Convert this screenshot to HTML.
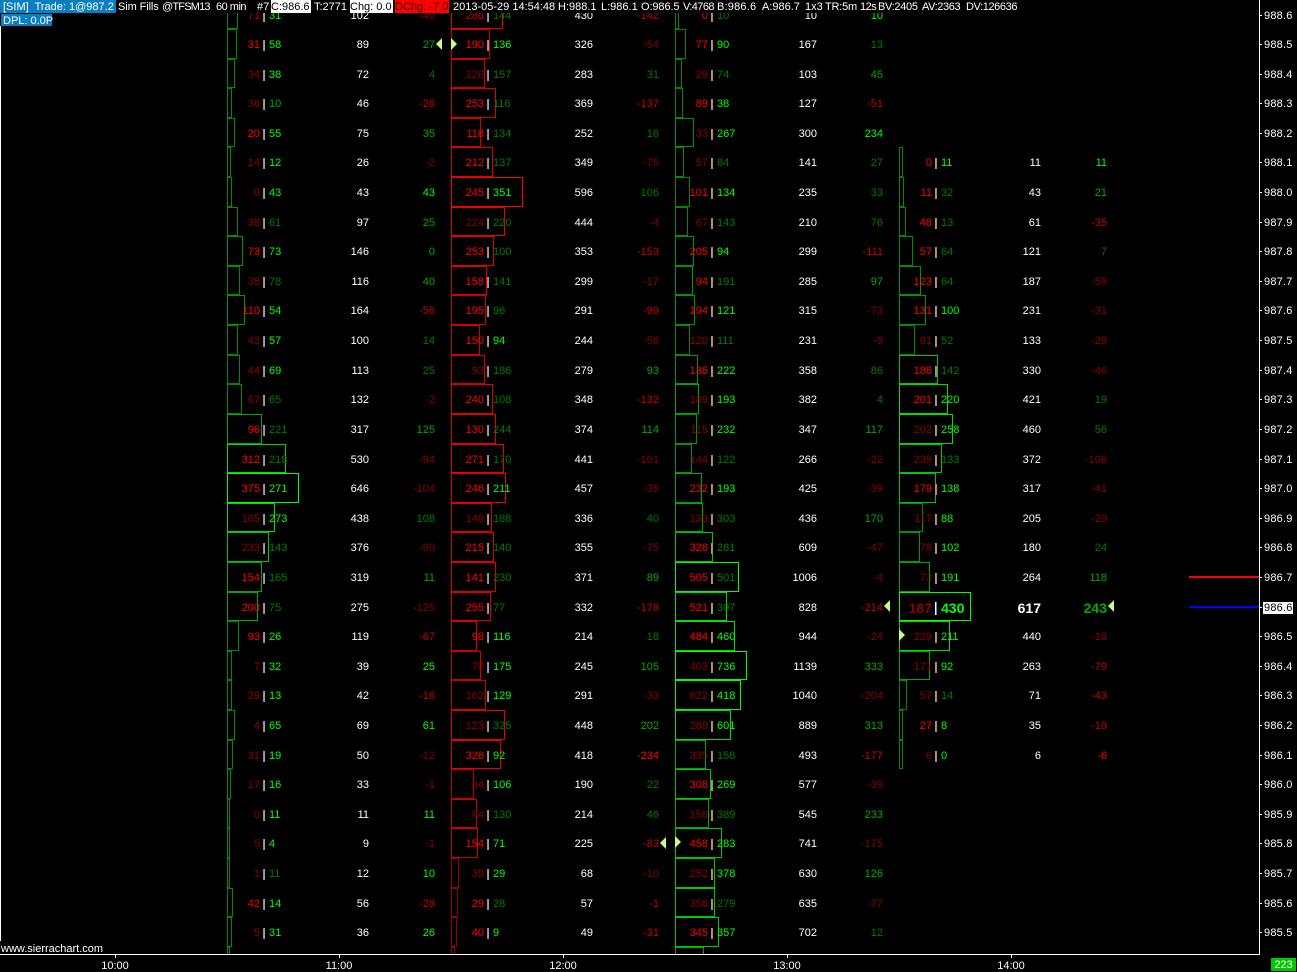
<!DOCTYPE html>
<html><head><meta charset="utf-8"><title>Chart</title>
<style>
html,body{margin:0;padding:0;background:#000}
#w{position:relative;width:1297px;height:972px;overflow:hidden;background:#000;color:#fff;font:11px/13px "Liberation Sans",Arial,sans-serif}
#h{position:absolute;left:0;top:0;width:1259px;height:13px;background:#000;z-index:5}
#h span,.t{position:absolute;top:0;height:13px;line-height:15px;white-space:nowrap;z-index:6}
.c{position:absolute;top:0;width:300px;height:955px}
.c p{position:absolute;left:0;width:230px;margin:0;line-height:30px;white-space:nowrap}
.c i{position:absolute;left:0;top:0;height:100%;box-sizing:border-box;border:1px solid}
.c b,.c s,.c em,.c q{position:absolute;top:1px;font-weight:normal;font-style:normal;text-decoration:none;quotes:none;height:30px}
.c q:before,.c q:after{content:""}
.c b{left:0;width:33px;text-align:right}
.c s{left:42px}
.c em{left:0;width:142px;text-align:right;color:#fff}
.c q{left:0;width:208px;text-align:right}
.c u{position:absolute;left:36px;top:11px;width:2px;height:11px;overflow:hidden;color:transparent;text-decoration:none;line-height:11px;background:linear-gradient(90deg,#d0803c 50%,#7aa6d6 50%)}
.o u{background:linear-gradient(90deg,#8a9cb0 50%,#d0803c 50%)}
.c .B b,.c .B s,.c .B em,.c .B q{font:bold 14px/32px "Liberation Sans",Arial,sans-serif;top:0}
.c .B u{background:linear-gradient(90deg,#fff 50%,#3a9cf0 50%);height:13px;top:10px}
.R{color:#f00}.r{color:#c80000}.d{color:#8c0000}
.G{color:#0f0}.g{color:#00aa00}.h{color:#007a00}
i.a{border-color:#008a00}i.b{border-color:#009800}i.c{border-color:#00a800}i.e{border-color:#00c800}i.f{border-color:#00e000}i.j{border-color:#0f0}
.n i.a{border-color:#900}.n i.b{border-color:#b00}.n i.c{border-color:#c00}.n i.e{border-color:#d00}.n i.f{border-color:#e80000}.n i.j{border-color:#f00}
.y0{top:0;height:29px}.y1{top:29px;height:30px}.y2{top:59px;height:29px}.y3{top:88px;height:30px}.y4{top:118px;height:29px}.y5{top:147px;height:30px}.y6{top:177px;height:30px}.y7{top:207px;height:29px}.y8{top:236px;height:30px}.y9{top:266px;height:29px}.y10{top:295px;height:30px}.y11{top:325px;height:30px}.y12{top:355px;height:29px}.y13{top:384px;height:30px}.y14{top:414px;height:30px}.y15{top:444px;height:29px}.y16{top:473px;height:30px}.y17{top:503px;height:29px}.y18{top:532px;height:30px}.y19{top:562px;height:30px}.y20{top:592px;height:29px}.y21{top:621px;height:30px}.y22{top:651px;height:29px}.y23{top:680px;height:30px}.y24{top:710px;height:30px}.y25{top:740px;height:29px}.y26{top:769px;height:30px}.y27{top:799px;height:29px}.y28{top:828px;height:30px}.y29{top:858px;height:30px}.y30{top:888px;height:29px}.y31{top:917px;height:30px}.y32{top:947px;height:8px}
.l,.m{position:absolute;width:0;height:0;border-style:solid;z-index:3}
.l{border-width:6px 6px 6px 0;border-color:transparent #c8ff80 transparent transparent}
.m{border-width:6px 0 6px 6px;border-color:transparent transparent transparent #c8ff80}
.ln{position:absolute;background:#fff}
.p{position:absolute;left:1264px;line-height:13px;height:13px;margin-top:1px;letter-spacing:.2px}
.k{position:absolute;left:1260px;width:2px;height:1px;background:#fff}
.x{position:absolute;top:960px;width:40px;text-align:center;line-height:13px}
.xk{position:absolute;top:955px;width:1px;height:3px;background:#fff}
</style></head><body><div id="w">
<div id="h"></div>
<span class="t" style="left:0;width:116px;background:#0a7fc0"><span style="position:static;padding-left:3px">[SIM]&nbsp; Trade: 1@987.2</span></span>
<span class="t" style="left:118px;letter-spacing:-.1px">Sim Fills</span>
<span class="t" style="left:162px;letter-spacing:-.8px">@TFSM13</span>
<span class="t" style="left:216px;letter-spacing:-.5px">60 min</span>
<span class="t" style="left:257px">#7</span>
<span class="t" style="left:271px;width:40px;background:#fff;color:#000">C:986.6</span>
<span class="t" style="left:314px">T:2771</span>
<span class="t" style="left:350px;width:43px;background:#fff;color:#000">Chg: 0.0</span>
<span class="t" style="left:395px;width:54px;background:#f00;color:#400">DChg: -7.0</span>
<span class="t" style="left:453px">2013-05-29 14:54:48</span>
<span class="t" style="left:558px">H:988.1</span>
<span class="t" style="left:601px">L:986.1</span>
<span class="t" style="left:641px;letter-spacing:-.1px">O:986.5</span>
<span class="t" style="left:683px;letter-spacing:-.6px">V:4768</span>
<span class="t" style="left:717px;letter-spacing:.2px">B:986.6</span>
<span class="t" style="left:762px">A:986.7</span>
<span class="t" style="left:805px">1x3</span>
<span class="t" style="left:825px;letter-spacing:-.2px">TR:5m</span>
<span class="t" style="left:860px;letter-spacing:-.5px">12s</span>
<span class="t" style="left:878px;letter-spacing:-.3px">BV:2405</span>
<span class="t" style="left:922px;letter-spacing:-.4px">AV:2363</span>
<span class="t" style="left:966px;letter-spacing:-.4px">DV:126636</span>
<span class="t" style="left:1px;top:14px;width:51px;height:12px;line-height:14px;background:#0a7fc0;padding-left:0"><span style="position:static;padding-left:2px">DPL: 0.0P</span></span>

<div class="c" style="left:227px">
<p class="y0"><i class="a" style="width:11px"></i><b class="r">71</b><u>|</u><s class="G">31</s><em>102</em><q class="d">-40</q></p>
<p class="y1"><i class="a" style="width:10px"></i><b class="R">31</b><u>|</u><s class="G">58</s><em>89</em><q class="g">27</q></p>
<p class="y2"><i class="a" style="width:8px"></i><b class="d">34</b><u>|</u><s class="G">38</s><em>72</em><q class="h">4</q></p>
<p class="y3"><i class="a" style="width:5px"></i><b class="d">36</b><u>|</u><s class="g">10</s><em>46</em><q class="r">-26</q></p>
<p class="y4"><i class="a" style="width:8px"></i><b class="R">20</b><u>|</u><s class="G">55</s><em>75</em><q class="g">35</q></p>
<p class="y5"><i class="a" style="width:4px"></i><b class="d">14</b><u>|</u><s class="G">12</s><em>26</em><q class="d">-2</q></p>
<p class="y6"><i class="a" style="width:5px"></i><b class="d">0</b><u>|</u><s class="G">43</s><em>43</em><q class="G">43</q></p>
<p class="y7"><i class="a" style="width:11px"></i><b class="d">36</b><u>|</u><s class="h">61</s><em>97</em><q class="g">25</q></p>
<p class="y8"><i class="b" style="width:16px"></i><b class="R">73</b><u>|</u><s class="G">73</s><em>146</em><q class="g">0</q></p>
<p class="y9"><i class="a" style="width:13px"></i><b class="d">38</b><u>|</u><s class="h">78</s><em>116</em><q class="g">40</q></p>
<p class="y10"><i class="b" style="width:18px"></i><b class="R">110</b><u>|</u><s class="G">54</s><em>164</em><q class="r">-56</q></p>
<p class="y11"><i class="a" style="width:11px"></i><b class="d">43</b><u>|</u><s class="G">57</s><em>100</em><q class="h">14</q></p>
<p class="y12"><i class="a" style="width:13px"></i><b class="d">44</b><u>|</u><s class="G">69</s><em>113</em><q class="h">25</q></p>
<p class="y13"><i class="a" style="width:15px"></i><b class="d">67</b><u>|</u><s class="h">65</s><em>132</em><q class="d">-2</q></p>
<p class="y14"><i class="c" style="width:35px"></i><b class="R">96</b><u>|</u><s class="h">221</s><em>317</em><q class="g">125</q></p>
<p class="y15"><i class="f" style="width:59px"></i><b class="R">312</b><u>|</u><s class="h">218</s><em>530</em><q class="d">-94</q></p>
<p class="y16"><i class="j" style="width:72px"></i><b class="R">375</b><u>|</u><s class="G">271</s><em>646</em><q class="d">-104</q></p>
<p class="y17"><i class="f" style="width:48px"></i><b class="d">165</b><u>|</u><s class="G">273</s><em>438</em><q class="h">108</q></p>
<p class="y18"><i class="e" style="width:42px"></i><b class="d">233</b><u>|</u><s class="h">143</s><em>376</em><q class="d">-90</q></p>
<p class="y19"><i class="c" style="width:35px"></i><b class="R">154</b><u>|</u><s class="h">165</s><em>319</em><q class="g">11</q></p>
<p class="y20"><i class="c" style="width:31px"></i><b class="R">200</b><u>|</u><s class="h">75</s><em>275</em><q class="d">-125</q></p>
<p class="y21"><i class="a" style="width:12px"></i><b class="R">93</b><u>|</u><s class="G">26</s><em>119</em><q class="r">-67</q></p>
<p class="y22"><i class="a" style="width:5px"></i><b class="d">7</b><u>|</u><s class="G">32</s><em>39</em><q class="G">25</q></p>
<p class="y23"><i class="a" style="width:5px"></i><b class="d">29</b><u>|</u><s class="G">13</s><em>42</em><q class="r">-16</q></p>
<p class="y24"><i class="a" style="width:8px"></i><b class="d">4</b><u>|</u><s class="G">65</s><em>69</em><q class="G">61</q></p>
<p class="y25"><i class="a" style="width:6px"></i><b class="d">31</b><u>|</u><s class="G">19</s><em>50</em><q class="d">-12</q></p>
<p class="y26"><i class="a" style="width:4px"></i><b class="d">17</b><u>|</u><s class="G">16</s><em>33</em><q class="d">-1</q></p>
<p class="y27"><i class="a" style="width:3px"></i><b class="d">0</b><u>|</u><s class="G">11</s><em>11</em><q class="G">11</q></p>
<p class="y28"><i class="a" style="width:3px"></i><b class="d">5</b><u>|</u><s class="G">4</s><em>9</em><q class="d">-1</q></p>
<p class="y29"><i class="a" style="width:3px"></i><b class="d">1</b><u>|</u><s class="h">11</s><em>12</em><q class="G">10</q></p>
<p class="y30"><i class="a" style="width:6px"></i><b class="R">42</b><u>|</u><s class="G">14</s><em>56</em><q class="r">-28</q></p>
<p class="y31"><i class="a" style="width:5px"></i><b class="d">5</b><u>|</u><s class="G">31</s><em>36</em><q class="G">26</q></p>
<p class="y32"><i class="a" style="width:3px"></i></p>
</div>

<div class="c n" style="left:451px">
<p class="y0"><i class="f" style="width:52px"></i><b class="r">288</b><u>|</u><s class="h">144</s><em>430</em><q class="r">-142</q></p>
<p class="y1"><i class="c" style="width:39px"></i><b class="R">190</b><u>|</u><s class="G">136</s><em>326</em><q class="d">-54</q></p>
<p class="y2"><i class="c" style="width:34px"></i><b class="d">126</b><u>|</u><s class="h">157</s><em>283</em><q class="h">31</q></p>
<p class="y3"><i class="e" style="width:45px"></i><b class="R">253</b><u>|</u><s class="h">116</s><em>369</em><q class="r">-137</q></p>
<p class="y4"><i class="c" style="width:30px"></i><b class="R">118</b><u>|</u><s class="h">134</s><em>252</em><q class="h">16</q></p>
<p class="y5"><i class="e" style="width:42px"></i><b class="R">212</b><u>|</u><s class="h">137</s><em>349</em><q class="d">-75</q></p>
<p class="y6"><i class="j" style="width:72px"></i><b class="R">245</b><u>|</u><s class="G">351</s><em>596</em><q class="h">106</q></p>
<p class="y7"><i class="f" style="width:54px"></i><b class="d">224</b><u>|</u><s class="h">220</s><em>444</em><q class="d">-4</q></p>
<p class="y8"><i class="e" style="width:43px"></i><b class="R">253</b><u>|</u><s class="h">100</s><em>353</em><q class="r">-153</q></p>
<p class="y9"><i class="e" style="width:36px"></i><b class="R">158</b><u>|</u><s class="h">141</s><em>299</em><q class="d">-17</q></p>
<p class="y10"><i class="c" style="width:35px"></i><b class="R">195</b><u>|</u><s class="h">96</s><em>291</em><q class="r">-99</q></p>
<p class="y11"><i class="c" style="width:29px"></i><b class="R">150</b><u>|</u><s class="G">94</s><em>244</em><q class="d">-56</q></p>
<p class="y12"><i class="c" style="width:34px"></i><b class="d">93</b><u>|</u><s class="h">186</s><em>279</em><q class="g">93</q></p>
<p class="y13"><i class="e" style="width:42px"></i><b class="R">240</b><u>|</u><s class="h">108</s><em>348</em><q class="r">-132</q></p>
<p class="y14"><i class="e" style="width:45px"></i><b class="R">130</b><u>|</u><s class="h">244</s><em>374</em><q class="g">114</q></p>
<p class="y15"><i class="f" style="width:53px"></i><b class="R">271</b><u>|</u><s class="h">170</s><em>441</em><q class="d">-101</q></p>
<p class="y16"><i class="f" style="width:55px"></i><b class="R">246</b><u>|</u><s class="G">211</s><em>457</em><q class="d">-35</q></p>
<p class="y17"><i class="e" style="width:41px"></i><b class="d">148</b><u>|</u><s class="h">188</s><em>336</em><q class="h">40</q></p>
<p class="y18"><i class="e" style="width:43px"></i><b class="R">215</b><u>|</u><s class="h">140</s><em>355</em><q class="d">-75</q></p>
<p class="y19"><i class="e" style="width:45px"></i><b class="R">141</b><u>|</u><s class="h">230</s><em>371</em><q class="g">89</q></p>
<p class="y20"><i class="e" style="width:40px"></i><b class="R">255</b><u>|</u><s class="h">77</s><em>332</em><q class="r">-178</q></p>
<p class="y21"><i class="c" style="width:26px"></i><b class="R">98</b><u>|</u><s class="G">116</s><em>214</em><q class="h">18</q></p>
<p class="y22"><i class="c" style="width:30px"></i><b class="d">70</b><u>|</u><s class="G">175</s><em>245</em><q class="g">105</q></p>
<p class="y23"><i class="c" style="width:35px"></i><b class="d">162</b><u>|</u><s class="G">129</s><em>291</em><q class="d">-33</q></p>
<p class="y24"><i class="f" style="width:54px"></i><b class="d">123</b><u>|</u><s class="h">325</s><em>448</em><q class="g">202</q></p>
<p class="y25"><i class="f" style="width:50px"></i><b class="R">326</b><u>|</u><s class="G">92</s><em>418</em><q class="R">-234</q></p>
<p class="y26"><i class="b" style="width:23px"></i><b class="d">84</b><u>|</u><s class="G">106</s><em>190</em><q class="h">22</q></p>
<p class="y27"><i class="c" style="width:26px"></i><b class="d">84</b><u>|</u><s class="h">130</s><em>214</em><q class="h">46</q></p>
<p class="y28"><i class="c" style="width:27px"></i><b class="R">154</b><u>|</u><s class="G">71</s><em>225</em><q class="r">-83</q></p>
<p class="y29"><i class="a" style="width:8px"></i><b class="d">39</b><u>|</u><s class="G">29</s><em>68</em><q class="d">-10</q></p>
<p class="y30"><i class="a" style="width:7px"></i><b class="R">29</b><u>|</u><s class="h">28</s><em>57</em><q class="r">-1</q></p>
<p class="y31"><i class="a" style="width:6px"></i><b class="R">40</b><u>|</u><s class="G">9</s><em>49</em><q class="r">-31</q></p>
<p class="y32"><i class="a" style="width:4px"></i></p>
</div>

<div class="c o" style="left:675px">
<p class="y0"><i class="a" style="width:4px"></i><b class="R">0</b><u>|</u><s class="h">10</s><em>10</em><q class="G">10</q></p>
<p class="y1"><i class="a" style="width:11px"></i><b class="R">77</b><u>|</u><s class="G">90</s><em>167</em><q class="h">13</q></p>
<p class="y2"><i class="a" style="width:7px"></i><b class="d">29</b><u>|</u><s class="h">74</s><em>103</em><q class="g">45</q></p>
<p class="y3"><i class="a" style="width:8px"></i><b class="R">89</b><u>|</u><s class="G">38</s><em>127</em><q class="r">-51</q></p>
<p class="y4"><i class="b" style="width:19px"></i><b class="d">33</b><u>|</u><s class="G">267</s><em>300</em><q class="G">234</q></p>
<p class="y5"><i class="a" style="width:9px"></i><b class="d">57</b><u>|</u><s class="h">84</s><em>141</em><q class="h">27</q></p>
<p class="y6"><i class="a" style="width:15px"></i><b class="R">101</b><u>|</u><s class="G">134</s><em>235</em><q class="h">33</q></p>
<p class="y7"><i class="a" style="width:13px"></i><b class="d">67</b><u>|</u><s class="h">143</s><em>210</em><q class="h">76</q></p>
<p class="y8"><i class="b" style="width:19px"></i><b class="R">205</b><u>|</u><s class="G">94</s><em>299</em><q class="r">-111</q></p>
<p class="y9"><i class="b" style="width:18px"></i><b class="R">94</b><u>|</u><s class="h">191</s><em>285</em><q class="g">97</q></p>
<p class="y10"><i class="b" style="width:20px"></i><b class="R">194</b><u>|</u><s class="G">121</s><em>315</em><q class="d">-73</q></p>
<p class="y11"><i class="a" style="width:15px"></i><b class="d">120</b><u>|</u><s class="h">111</s><em>231</em><q class="d">-9</q></p>
<p class="y12"><i class="b" style="width:23px"></i><b class="R">136</b><u>|</u><s class="G">222</s><em>358</em><q class="h">86</q></p>
<p class="y13"><i class="c" style="width:24px"></i><b class="d">189</b><u>|</u><s class="G">193</s><em>382</em><q class="h">4</q></p>
<p class="y14"><i class="b" style="width:22px"></i><b class="d">115</b><u>|</u><s class="G">232</s><em>347</em><q class="g">117</q></p>
<p class="y15"><i class="b" style="width:17px"></i><b class="d">144</b><u>|</u><s class="h">122</s><em>266</em><q class="d">-22</q></p>
<p class="y16"><i class="c" style="width:27px"></i><b class="R">232</b><u>|</u><s class="G">193</s><em>425</em><q class="d">-39</q></p>
<p class="y17"><i class="c" style="width:28px"></i><b class="d">133</b><u>|</u><s class="h">303</s><em>436</em><q class="g">170</q></p>
<p class="y18"><i class="e" style="width:38px"></i><b class="R">328</b><u>|</u><s class="h">281</s><em>609</em><q class="d">-47</q></p>
<p class="y19"><i class="j" style="width:64px"></i><b class="R">505</b><u>|</u><s class="h">501</s><em>1006</em><q class="d">-4</q></p>
<p class="y20"><i class="f" style="width:52px"></i><b class="R">521</b><u>|</u><s class="h">307</s><em>828</em><q class="r">-214</q></p>
<p class="y21"><i class="f" style="width:60px"></i><b class="R">484</b><u>|</u><s class="G">460</s><em>944</em><q class="d">-24</q></p>
<p class="y22"><i class="j" style="width:72px"></i><b class="d">403</b><u>|</u><s class="G">736</s><em>1139</em><q class="g">333</q></p>
<p class="y23"><i class="j" style="width:66px"></i><b class="d">622</b><u>|</u><s class="G">418</s><em>1040</em><q class="d">-204</q></p>
<p class="y24"><i class="f" style="width:56px"></i><b class="d">288</b><u>|</u><s class="G">601</s><em>889</em><q class="g">313</q></p>
<p class="y25"><i class="c" style="width:31px"></i><b class="d">335</b><u>|</u><s class="h">158</s><em>493</em><q class="r">-177</q></p>
<p class="y26"><i class="e" style="width:36px"></i><b class="R">308</b><u>|</u><s class="G">269</s><em>577</em><q class="d">-39</q></p>
<p class="y27"><i class="c" style="width:34px"></i><b class="d">156</b><u>|</u><s class="h">389</s><em>545</em><q class="g">233</q></p>
<p class="y28"><i class="e" style="width:47px"></i><b class="R">458</b><u>|</u><s class="G">283</s><em>741</em><q class="d">-175</q></p>
<p class="y29"><i class="e" style="width:40px"></i><b class="d">252</b><u>|</u><s class="G">378</s><em>630</em><q class="g">126</q></p>
<p class="y30"><i class="e" style="width:40px"></i><b class="d">356</b><u>|</u><s class="h">279</s><em>635</em><q class="d">-77</q></p>
<p class="y31"><i class="e" style="width:44px"></i><b class="R">345</b><u>|</u><s class="G">357</s><em>702</em><q class="h">12</q></p>
<p class="y32"><i class="c" style="width:29px"></i></p>
</div>

<div class="c o" style="left:899px">
<p class="y5"><i class="a" style="width:4px"></i><b class="R">0</b><u>|</u><s class="G">11</s><em>11</em><q class="G">11</q></p>
<p class="y6"><i class="a" style="width:5px"></i><b class="R">11</b><u>|</u><s class="h">32</s><em>43</em><q class="g">21</q></p>
<p class="y7"><i class="a" style="width:7px"></i><b class="R">48</b><u>|</u><s class="h">13</s><em>61</em><q class="r">-35</q></p>
<p class="y8"><i class="a" style="width:14px"></i><b class="R">57</b><u>|</u><s class="h">64</s><em>121</em><q class="h">7</q></p>
<p class="y9"><i class="b" style="width:22px"></i><b class="R">123</b><u>|</u><s class="h">64</s><em>187</em><q class="d">-59</q></p>
<p class="y10"><i class="b" style="width:27px"></i><b class="R">131</b><u>|</u><s class="G">100</s><em>231</em><q class="d">-31</q></p>
<p class="y11"><i class="a" style="width:16px"></i><b class="d">81</b><u>|</u><s class="h">52</s><em>133</em><q class="d">-29</q></p>
<p class="y12"><i class="e" style="width:39px"></i><b class="R">188</b><u>|</u><s class="h">142</s><em>330</em><q class="d">-46</q></p>
<p class="y13"><i class="f" style="width:49px"></i><b class="R">201</b><u>|</u><s class="G">220</s><em>421</em><q class="h">19</q></p>
<p class="y14"><i class="f" style="width:54px"></i><b class="d">202</b><u>|</u><s class="G">258</s><em>460</em><q class="h">56</q></p>
<p class="y15"><i class="e" style="width:43px"></i><b class="d">239</b><u>|</u><s class="h">133</s><em>372</em><q class="d">-106</q></p>
<p class="y16"><i class="e" style="width:37px"></i><b class="R">179</b><u>|</u><s class="G">138</s><em>317</em><q class="d">-41</q></p>
<p class="y17"><i class="b" style="width:24px"></i><b class="d">117</b><u>|</u><s class="G">88</s><em>205</em><q class="d">-29</q></p>
<p class="y18"><i class="b" style="width:21px"></i><b class="d">78</b><u>|</u><s class="G">102</s><em>180</em><q class="h">24</q></p>
<p class="y19"><i class="c" style="width:31px"></i><b class="d">73</b><u>|</u><s class="G">191</s><em>264</em><q class="g">118</q></p>
<p class="y20 B"><i class="j" style="width:72px"></i><b class="d">187</b><u>|</u><s class="G">430</s><em>617</em><q class="g">243</q></p>
<p class="y21"><i class="f" style="width:51px"></i><b class="d">229</b><u>|</u><s class="G">211</s><em>440</em><q class="d">-18</q></p>
<p class="y22"><i class="c" style="width:31px"></i><b class="d">171</b><u>|</u><s class="G">92</s><em>263</em><q class="r">-79</q></p>
<p class="y23"><i class="a" style="width:8px"></i><b class="d">57</b><u>|</u><s class="h">14</s><em>71</em><q class="r">-43</q></p>
<p class="y24"><i class="a" style="width:4px"></i><b class="R">27</b><u>|</u><s class="G">8</s><em>35</em><q class="r">-19</q></p>
<p class="y25"><i class="a" style="width:4px"></i><b class="d">6</b><u>|</u><s class="G">0</s><em>6</em><q class="R">-6</q></p>
</div>

<div class="l" style="left:436px;top:38px"></div>
<div class="m" style="left:451px;top:38px"></div>
<div class="l" style="left:660px;top:837px"></div>
<div class="m" style="left:675px;top:836px"></div>
<div class="l" style="left:884px;top:600px"></div>
<div class="m" style="left:899px;top:629px"></div>
<div class="l" style="left:1108px;top:600px"></div>

<div class="ln" style="left:1259px;top:0;width:1px;height:955px"></div>
<div class="ln" style="left:0;top:954px;width:1260px;height:1px"></div>
<div class="ln" style="left:0;top:26px;width:1px;height:915px"></div>
<div style="position:absolute;left:1189px;top:576px;width:70px;height:2px;background:#f00"></div>
<div style="position:absolute;left:1189px;top:606px;width:70px;height:2px;background:#00f"></div>

<div class="k" style="top:15px"></div><div class="p" style="top:9px">988.6</div>
<div class="k" style="top:44px"></div><div class="p" style="top:38px">988.5</div>
<div class="k" style="top:74px"></div><div class="p" style="top:68px">988.4</div>
<div class="k" style="top:103px"></div><div class="p" style="top:97px">988.3</div>
<div class="k" style="top:133px"></div><div class="p" style="top:127px">988.2</div>
<div class="k" style="top:162px"></div><div class="p" style="top:156px">988.1</div>
<div class="k" style="top:192px"></div><div class="p" style="top:186px">988.0</div>
<div class="k" style="top:222px"></div><div class="p" style="top:216px">987.9</div>
<div class="k" style="top:251px"></div><div class="p" style="top:245px">987.8</div>
<div class="k" style="top:281px"></div><div class="p" style="top:275px">987.7</div>
<div class="k" style="top:310px"></div><div class="p" style="top:304px">987.6</div>
<div class="k" style="top:340px"></div><div class="p" style="top:334px">987.5</div>
<div class="k" style="top:370px"></div><div class="p" style="top:364px">987.4</div>
<div class="k" style="top:399px"></div><div class="p" style="top:393px">987.3</div>
<div class="k" style="top:429px"></div><div class="p" style="top:423px">987.2</div>
<div class="k" style="top:459px"></div><div class="p" style="top:453px">987.1</div>
<div class="k" style="top:488px"></div><div class="p" style="top:482px">987.0</div>
<div class="k" style="top:518px"></div><div class="p" style="top:512px">986.9</div>
<div class="k" style="top:547px"></div><div class="p" style="top:541px">986.8</div>
<div class="k" style="top:577px"></div><div class="p" style="top:571px">986.7</div>
<div class="k" style="top:607px"></div><div class="p" style="left:1263px;top:601px;width:29px;padding-left:1px;height:12px;line-height:13px;background:#fff;color:#000">986.6</div>
<div class="k" style="top:636px"></div><div class="p" style="top:630px">986.5</div>
<div class="k" style="top:666px"></div><div class="p" style="top:660px">986.4</div>
<div class="k" style="top:695px"></div><div class="p" style="top:689px">986.3</div>
<div class="k" style="top:725px"></div><div class="p" style="top:719px">986.2</div>
<div class="k" style="top:755px"></div><div class="p" style="top:749px">986.1</div>
<div class="k" style="top:784px"></div><div class="p" style="top:778px">986.0</div>
<div class="k" style="top:814px"></div><div class="p" style="top:808px">985.9</div>
<div class="k" style="top:843px"></div><div class="p" style="top:837px">985.8</div>
<div class="k" style="top:873px"></div><div class="p" style="top:867px">985.7</div>
<div class="k" style="top:903px"></div><div class="p" style="top:897px">985.6</div>
<div class="k" style="top:932px"></div><div class="p" style="top:926px">985.5</div>

<div style="position:absolute;left:1px;top:942px;line-height:14px;height:12px;background:#000">www.sierrachart.com</div>
<div class="xk" style="left:115px"></div><div class="x" style="left:95px">10:00</div>
<div class="xk" style="left:339px"></div><div class="x" style="left:319px">11:00</div>
<div class="xk" style="left:563px"></div><div class="x" style="left:543px">12:00</div>
<div class="xk" style="left:787px"></div><div class="x" style="left:767px">13:00</div>
<div class="xk" style="left:1011px"></div><div class="x" style="left:991px">14:00</div>
<div style="position:absolute;left:1271px;top:958px;width:25px;height:13px;line-height:15px;background:#00c800;color:#fff;text-align:center">223</div>
</div></body></html>
